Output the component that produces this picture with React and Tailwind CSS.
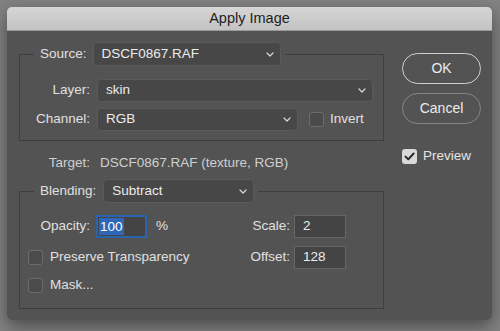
import React from 'react';

const font = { fontFamily: '"Liberation Sans", Arial, sans-serif' };

const Chevron = () => (
  <svg width="8" height="5" viewBox="0 0 8 5" className="shrink-0">
    <path d="M1 1l3 3 3-3" fill="none" stroke="#d8d8d8" strokeWidth="1.2" strokeLinecap="round" strokeLinejoin="round" />
  </svg>
);

const Select = ({ value, className }) => (
  <div className={`flex items-center justify-between rounded-[4px] bg-[#474747] border border-[#5a5a5a] pl-[8px] pr-[6px] text-[#ececec] ${className}`}>
    <span>{value}</span>
    <Chevron />
  </div>
);

const Box = ({ checked }) =>
  checked ? (
    <div className="w-[15px] h-[15px] rounded-[3px] bg-[#d9d9d9] flex items-center justify-center shrink-0">
      <svg width="11" height="9" viewBox="0 0 11 9">
        <path d="M1.5 4.6l2.8 2.7L9.6 1.5" fill="none" stroke="#2b2b2b" strokeWidth="2" strokeLinecap="round" strokeLinejoin="round" />
      </svg>
    </div>
  ) : (
    <div className="w-[15px] h-[15px] rounded-[3px] bg-[#4b4b4b] border border-[#6c6c6c] shrink-0" />
  );

const Field = ({ value }) => (
  <div className="w-[52px] h-[23px] bg-[#444444] border border-[#666666] flex items-center pl-[8px] text-[#ececec]">
    {value}
  </div>
);

export default function App() {
  return (
    <div className="w-[500px] h-[331px] bg-[#838383] overflow-hidden text-[13.5px]" style={font}>
      <div className="ml-[7px] mt-[7px] w-[485px] h-[313px] rounded-[5px] overflow-hidden shadow-[0_6px_18px_rgba(0,0,0,0.45)] flex flex-col">
        {/* title bar */}
        <div className="h-[24px] bg-gradient-to-b from-[#d6d6d6] to-[#c3c3c3] border-b border-[#9a9a9a] flex items-center justify-center text-[14.5px] text-[#1e1e1e]">
          Apply Image
        </div>

        {/* body */}
        <div className="flex-1 bg-[#535353] flex pl-[12px] pt-[11px]">
          {/* left column */}
          <div className="w-[365px] flex flex-col">
            <fieldset className="border border-[#3f3f3f] pb-[9px]">
              <legend className="ml-[14px] pl-[6px] pr-[4px]">
                <div className="flex items-center h-[24px]">
                  <span className="text-[#e0e0e0]">Source:</span>
                  <Select value="DSCF0867.RAF" className="ml-[6px] w-[188px] h-[24px]" />
                </div>
              </legend>
              <div className="flex items-center mt-[13px]">
                <span className="w-[70px] text-right text-[#e0e0e0]">Layer:</span>
                <Select value="skin" className="ml-[7px] w-[276px] h-[23px]" />
              </div>
              <div className="flex items-center mt-[6px]">
                <span className="w-[70px] text-right text-[#e0e0e0]">Channel:</span>
                <Select value="RGB" className="ml-[7px] w-[201px] h-[23px]" />
                <div className="ml-[11px]"><Box /></div>
                <span className="ml-[6px] text-[#e0e0e0]">Invert</span>
              </div>
            </fieldset>

            <div className="flex items-center h-[16px] mt-[14px]">
              <span className="w-[71px] text-right text-[#cfcfcf]">Target:</span>
              <span className="ml-[10px] text-[#cfcfcf]">DSCF0867.RAF (texture, RGB)</span>
            </div>

            <fieldset className="border border-[#3f3f3f] pb-[15px] mt-[8px]">
              <legend className="ml-[14px] pl-[6px] pr-[4px]">
                <div className="flex items-center h-[24px]">
                  <span className="text-[#e0e0e0]">Blending:</span>
                  <Select value="Subtract" className="ml-[7px] w-[151px] h-[24px]" />
                </div>
              </legend>
              <div className="flex items-center h-[23px] mt-[12px]">
                <div className="w-[230px] flex items-center">
                  <span className="w-[70px] text-right text-[#e0e0e0]">Opacity:</span>
                  <div className="ml-[6px] w-[51px] h-[23px] bg-[#444444] border-2 border-[#2b64ad] flex items-center pl-[1px]">
                    <span className="bg-[#2e66b8] text-white px-[1px] leading-[17px]">100</span>
                  </div>
                  <span className="ml-[9px] text-[#e0e0e0]">%</span>
                </div>
                <span className="w-[40px] text-right text-[#e0e0e0]">Scale:</span>
                <div className="ml-[4px]"><Field value="2" /></div>
              </div>
              <div className="flex items-center h-[23px] mt-[8px]">
                <div className="w-[230px] flex items-center pl-[8px]">
                  <Box />
                  <span className="ml-[7px] text-[#e0e0e0]">Preserve Transparency</span>
                </div>
                <span className="w-[40px] text-right text-[#e0e0e0]">Offset:</span>
                <div className="ml-[4px]"><Field value="128" /></div>
              </div>
              <div className="flex items-center h-[15px] mt-[9px] pl-[8px]">
                <Box />
                <span className="ml-[7px] text-[#e0e0e0]">Mask...</span>
              </div>
            </fieldset>
          </div>

          {/* right column */}
          <div className="ml-[18px] mt-[11px] w-[79px] flex flex-col">
            <button className="h-[31px] rounded-full border-[1.5px] border-[#cfcfcf] text-[#ececec] text-[14px]">OK</button>
            <button className="h-[31px] mt-[9px] rounded-full border border-[#858585] text-[#ececec] text-[14px]">Cancel</button>
            <div className="flex items-center mt-[22px]">
              <Box checked />
              <span className="ml-[6px] text-[#e4e4e4]">Preview</span>
            </div>
          </div>
        </div>
      </div>
    </div>
  );
}
